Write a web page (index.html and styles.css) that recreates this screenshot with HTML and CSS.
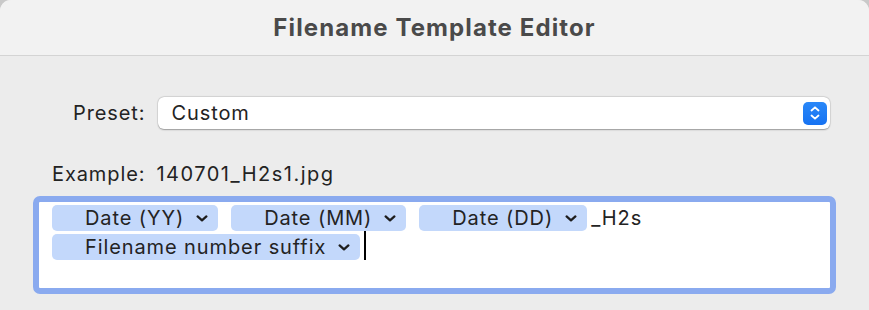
FILE: index.html
```html
<!DOCTYPE html>
<html lang="en">
<head>
    <meta charset="UTF-8">
    <meta name="viewport" content="width=device-width, initial-scale=1.0">
    <title>Filename Template Editor</title>
    <link rel="stylesheet" href="styles.css">
</head>
<body>
    <div class="window">
        <header class="titlebar">
            <h1>Filename Template Editor</h1>
        </header>

        <div class="content">
            <div class="preset-row">
                <span class="label">Preset:</span>
                <div class="popup">
                    <span class="popup-value">Custom</span>
                    <span class="stepper">
                        <svg width="12" height="16" viewBox="0 0 12 16">
                            <path d="M2.5 5.5 L6 2.3 L9.5 5.5" fill="none" stroke="#fff" stroke-width="1.8" stroke-linecap="round" stroke-linejoin="round"/>
                            <path d="M2.5 10.5 L6 13.7 L9.5 10.5" fill="none" stroke="#fff" stroke-width="1.8" stroke-linecap="round" stroke-linejoin="round"/>
                        </svg>
                    </span>
                </div>
            </div>

            <div class="example-row">
                <span class="label">Example:</span>
                <span class="example-value">140701_H2s1.jpg</span>
            </div>

            <div class="template-field">
                <span class="token">Date (YY)<svg class="chevron" width="12" height="7" viewBox="0 0 12 7"><path d="M1.6 1.4 L6 5.4 L10.4 1.4" fill="none" stroke="#1d1d1d" stroke-width="2.2" stroke-linecap="round" stroke-linejoin="round"/></svg></span>
                <span class="token">Date (MM)<svg class="chevron" width="12" height="7" viewBox="0 0 12 7"><path d="M1.6 1.4 L6 5.4 L10.4 1.4" fill="none" stroke="#1d1d1d" stroke-width="2.2" stroke-linecap="round" stroke-linejoin="round"/></svg></span>
                <span class="token tight">Date (DD)<svg class="chevron" width="12" height="7" viewBox="0 0 12 7"><path d="M1.6 1.4 L6 5.4 L10.4 1.4" fill="none" stroke="#1d1d1d" stroke-width="2.2" stroke-linecap="round" stroke-linejoin="round"/></svg></span>
                <span class="literal">_H2s</span>
                <span class="token tight">Filename number suffix<svg class="chevron" width="12" height="7" viewBox="0 0 12 7"><path d="M1.6 1.4 L6 5.4 L10.4 1.4" fill="none" stroke="#1d1d1d" stroke-width="2.2" stroke-linecap="round" stroke-linejoin="round"/></svg></span>
                <span class="caret"></span>
            </div>
        </div>
    </div>
</body>
</html>
```

FILE: styles.css
```css
:root {
    --window-bg: #ececec;
    --title-bg: #f2f2f2;
    --text-color: #232323;
    --token-bg: #c3d8fb;
    --focus-ring: #8aaaef;
    --accent: #1c7df6;
}

* {
    margin: 0;
    padding: 0;
    box-sizing: border-box;
}

body {
    background-color: #c9c9c9;
    font-family: Inter, "Liberation Sans", sans-serif;
    font-size: 20px;
    letter-spacing: 0.9px;
    color: var(--text-color);
    width: 869px;
    height: 310px;
    overflow: hidden;
}

.window {
    width: 869px;
    height: 310px;
    background-color: var(--window-bg);
    border-radius: 11px 11px 0 0;
    overflow: hidden;
}

.titlebar {
    height: 56px;
    background-color: var(--title-bg);
    border-bottom: 1px solid #d4d4d4;
    display: flex;
    align-items: center;
    justify-content: center;
}

.titlebar h1 {
    font-size: 24px;
    font-weight: 700;
    color: #4a4a4a;
    letter-spacing: 1.1px;
    margin-top: -1px;
}

.content {
    padding: 41px 33px 0 33px;
}

.preset-row {
    display: flex;
    align-items: center;
    padding-left: 40px;
    gap: 13px;
}

.popup {
    flex: 1;
    height: 32px;
    margin-right: 6px;
    background-color: #fff;
    border-radius: 6px;
    box-shadow: 0 0.5px 1.5px rgba(0, 0, 0, 0.32), 0 0 0 0.5px rgba(0, 0, 0, 0.08);
    display: flex;
    align-items: center;
    justify-content: space-between;
    padding: 0 3px 0 13px;
}

.stepper {
    width: 24px;
    height: 23px;
    border-radius: 5px;
    background: linear-gradient(#2a88f8, #1672f2);
    display: flex;
    align-items: center;
    justify-content: center;
}

.example-row {
    display: flex;
    align-items: center;
    height: 24px;
    margin-top: 33px;
    padding-left: 19px;
    gap: 11px;
}

.example-value {
    letter-spacing: 1.5px;
}

.template-field {
    margin-top: 10px;
    height: 98px;
    border: 6px solid var(--focus-ring);
    border-radius: 7px;
    background-color: #fff;
    padding: 3px 13px;
    display: flex;
    flex-wrap: wrap;
    align-content: flex-start;
    align-items: center;
    row-gap: 2px;
}

.token {
    height: 26px;
    display: inline-flex;
    align-items: center;
    padding: 0 10px 0 33px;
    background-color: var(--token-bg);
    border-radius: 5px;
    margin-right: 13px;
    white-space: nowrap;
}

.token.tight {
    margin-right: 4px;
}

.chevron {
    margin-left: 12px;
    margin-top: 1px;
}

.literal {
    line-height: 26px;
}

.caret {
    width: 2px;
    height: 29px;
    background-color: #000;
    margin-top: -2px;
}
```
